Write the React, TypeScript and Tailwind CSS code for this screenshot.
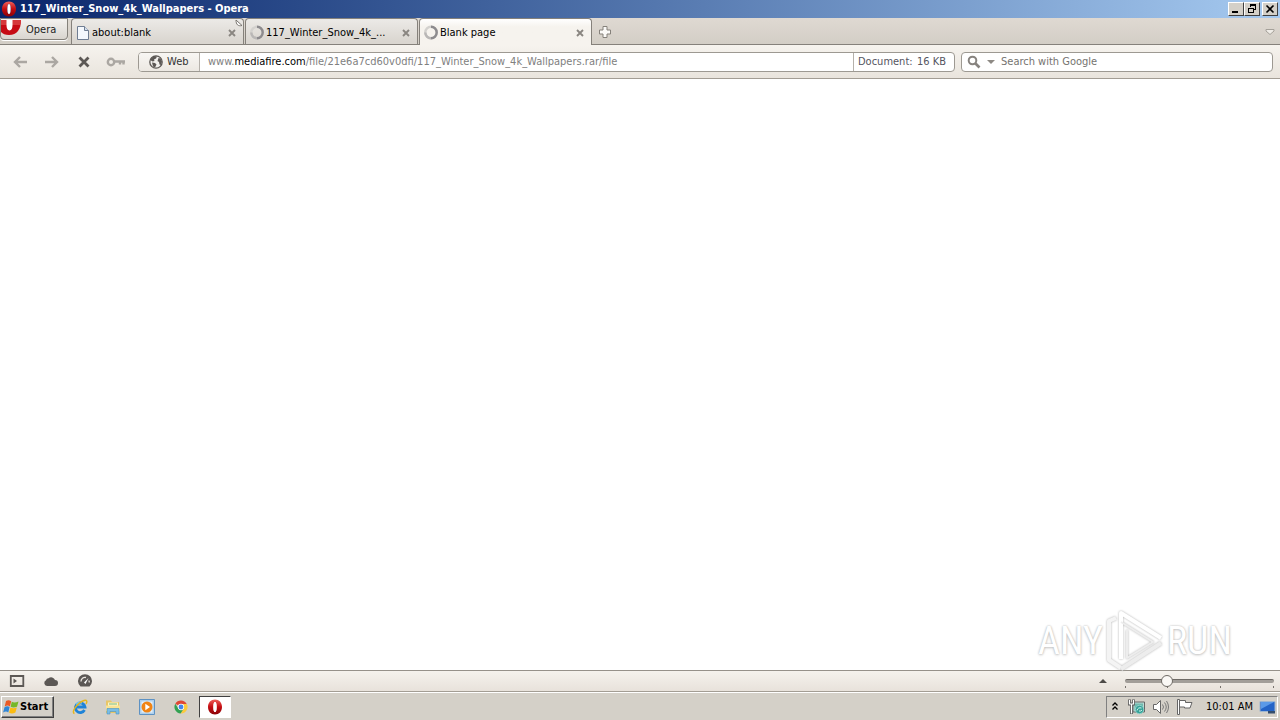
import React from "react";

const BTN3D =
  "border border-t-white border-l-white border-r-[#404040] border-b-[#404040] bg-[#d4d0c8]";

function OperaMark({ className }: { className: string }) {
  return (
    <svg className={className} viewBox="0 0 16 16" aria-hidden="true">
      <defs>
        <linearGradient id="opera-red" x1="0" y1="0" x2="0" y2="1">
          <stop offset="0" stopColor="#f0605a" />
          <stop offset="0.5" stopColor="#c40d12" />
          <stop offset="1" stopColor="#8a0307" />
        </linearGradient>
      </defs>
      <path
        fillRule="evenodd"
        fill="url(#opera-red)"
        d="M8 .5C3.900 .5 1 3.600 1 8s2.900 7.500 7 7.500 7-3.100 7-7.500S12.100.5 8 .5Zm0 2.500c1.100 0 1.600 1.800 1.600 5s-.5 5-1.600 5S6.400 11.200 6.400 8 6.900 3 8 3Z"
      />
      <path d="M8 3c1.100 0 1.600 1.800 1.600 5s-.5 5-1.600 5S6.400 11.200 6.400 8 6.900 3 8 3Z" fill="#fff" />
    </svg>
  );
}

function Spinner() {
  return (
    <svg className="size-4 shrink-0" viewBox="0 0 16 16" fill="none" strokeWidth="2.400" aria-hidden="true">
      <circle cx="8" cy="7.500" r="5.700" stroke="#d3d1ce" />
      <path d="M8 1.800A5.700 5.700 0 0 1 8 13.200" stroke="#8d8b8e" />
      <path d="M8 13.200A5.700 5.700 0 0 1 2.300 7.500" stroke="#b9b7b6" />
    </svg>
  );
}

function PageIcon() {
  return (
    <svg className="size-4 shrink-0" viewBox="0 0 16 16" aria-hidden="true">
      <path d="M2.500 1.500h7l4 4v9h-11z" fill="#f4f8fd" stroke="#6f7d92" />
      <path d="M9.500 1.500v4h4" fill="#d5e0ee" stroke="#6f7d92" />
    </svg>
  );
}

function CloseX() {
  return (
    <svg className="size-2" viewBox="0 0 8 8" aria-hidden="true">
      <path d="M1 1l6 6M7 1L1 7" stroke="#8a8681" strokeWidth="1.900" />
    </svg>
  );
}

function Tab({ icon, label, active }: { icon: React.ReactNode; label: string; active?: boolean }) {
  return (
    <div
      className={
        "flex w-[173px] items-center rounded-t-[4px] border border-b-0 border-[#85817b] pt-0.5 pr-[5px] pl-[3px] " +
        (active
          ? "h-[27px] bg-gradient-to-b from-white to-[#f6f3ee] to-30%"
          : "h-[26px] bg-gradient-to-b from-[#eceae7] to-[#dad6d0] to-90%")
      }
    >
      {icon}
      <button type="button" className="min-w-0 flex-1 truncate pl-px text-left text-black">
        {label}
      </button>
      <button type="button" aria-label={"Close " + label} className="flex size-3 items-center justify-center">
        <CloseX />
      </button>
    </div>
  );
}

function TitleBar() {
  return (
    <header className="flex h-[18px] items-center bg-gradient-to-r from-[#0a246a] to-[#a6caf0] pr-0.5 pl-px">
      <OperaMark className="size-4" />
      <h1 className="flex-1 pl-[3px] font-bold text-white">117_Winter_Snow_4k_Wallpapers - Opera</h1>
      <button type="button" aria-label="Minimize" className={"h-3.5 w-4 " + BTN3D}>
        <svg className="size-3" viewBox="0 0 12 12" shapeRendering="crispEdges">
          <path d="M3 8h6v2H3z" />
        </svg>
      </button>
      <button type="button" aria-label="Restore" className={"h-3.5 w-4 " + BTN3D}>
        <svg className="ml-px size-3" viewBox="0 0 12 12" fill="none" stroke="#000" shapeRendering="crispEdges">
          <path d="M4.500 4V1.500h5v5H8M4 2h6M2.500 5.500h5v4h-5zM2 5h6" />
        </svg>
      </button>
      <button type="button" aria-label="Close window" className={"ml-0.5 h-3.5 w-4 " + BTN3D}>
        <svg className="ml-px size-3" viewBox="0 0 12 12">
          <path d="M2.500 2.500l7 7M9.500 2.500l-7 7" stroke="#000" strokeWidth="1.600" />
        </svg>
      </button>
    </header>
  );
}

function TabBar() {
  return (
    <nav className="relative flex h-[27px] items-end gap-px border-b border-[#85817b] bg-gradient-to-b from-[#dfd9d2] to-[#d3cec6]">
      <button
        type="button"
        className="mr-0.5 flex h-[22px] w-[68px] items-start self-start rounded-br-[4px] rounded-bl-[4px] border border-[#85817b] bg-gradient-to-b from-[#f4f2f0] to-[#d9d5cf] text-[#222] shadow-[0_1px_0_#fff]"
      >
        <svg className="h-4 w-5" viewBox="0 0 20 16" aria-hidden="true">
          <path d="M0 1h20c0 9-4 15-12 15-4 0-6-1-8-3z" fill="#c60b14" />
          <path d="M0 1h20l-1 5H0z" fill="#dd4c4c" opacity=".7" />
          <path d="M5.500 1h6v5c0 3-1 5.500-3 5.500s-3-2.500-3-5.500z" fill="#fff" />
        </svg>
        <span className="pt-1 pl-[5px]">Opera</span>
      </button>
      <Tab icon={<PageIcon />} label="about:blank" />
      <Tab icon={<Spinner />} label="117_Winter_Snow_4k_..." />
      <div className="-mb-px">
        <Tab icon={<Spinner />} label="Blank page" active />
      </div>
      <button type="button" aria-label="New tab" className="mb-[5px] ml-[5px]">
        <svg className="size-3.5" viewBox="0 0 14 14">
          <path d="M5 1.500h4V5h3.500v4H9v3.500H5V9H1.500V5H5z" fill="#fbfaf8" stroke="#85817b" />
        </svg>
      </button>
      <button type="button" aria-label="Closed tabs" className="mr-1 mb-2 ml-auto">
        <svg className="h-2 w-3" viewBox="0 0 12 8">
          <path d="M2 1.500h8v1.500L6 6.500 2 3z" fill="#efece7" stroke="#a5a19a" />
        </svg>
      </button>
      <svg className="absolute top-px left-[235px] size-2" viewBox="0 0 8 8" aria-hidden="true">
        <path d="M1 1l6 5.500c-4 1-6-1-6-5.500z" fill="#fff" stroke="#77736e" />
      </svg>
    </nav>
  );
}

function Toolbar() {
  return (
    <div className="flex h-[34px] items-center border-b border-[#a39d94] bg-gradient-to-b from-[#f6f3ee] to-[#e9e4dd] pr-[7px] pl-3">
      <button type="button" aria-label="Back" className="w-8">
        <svg className="h-4 w-4" viewBox="0 0 16 16" fill="none" stroke="#aba7a2" strokeWidth="2.400">
          <path d="M15 8H3M8 3L3 8l5 5" />
        </svg>
      </button>
      <button type="button" aria-label="Forward" className="w-8">
        <svg className="h-4 w-4" viewBox="0 0 16 16" fill="none" stroke="#aba7a2" strokeWidth="2.400">
          <path d="M1 8h12M8 3l5 5-5 5" />
        </svg>
      </button>
      <button type="button" aria-label="Stop" className="w-[30px]">
        <svg className="h-4 w-4" viewBox="0 0 16 16" stroke="#5c5855" strokeWidth="2.800">
          <path d="M3.500 3.500l9 9M12.500 3.500l-9 9" />
        </svg>
      </button>
      <button type="button" aria-label="Password manager" className="w-8">
        <svg className="h-4 w-5" viewBox="0 0 20 16" fill="none" stroke="#aba7a2" strokeWidth="2.400">
          <circle cx="5" cy="8" r="3.200" />
          <path d="M8 7.500h11M14 8v2.500M17.500 8v2.500" />
        </svg>
      </button>
      <div className="flex h-5 min-w-0 flex-1 overflow-hidden rounded-[4px] border border-[#9d9992] bg-white">
        <button
          type="button"
          className="flex w-[61px] items-center gap-[3px] border-r border-[#b5b1ab] bg-gradient-to-b from-[#f8f6f3] to-[#ece8e2] pl-[9px] text-[#333]"
        >
          <svg className="size-4" viewBox="0 0 16 16" aria-hidden="true">
            <circle cx="8" cy="8" r="6.200" fill="#f1efec" stroke="#5c5855" strokeWidth="1.300" />
            <path
              d="M3 4.500l3-2.500 3 .5-1 2-2 1 .5 1.500-2 .5L2.300 6zM4 8.500l3 .5 1.500 1.500L7 13.500l-2-1zM10.500 4l2 .5 1.500 3-1 3.500-1.500-.5-.5-2.500-1.500-1z"
              fill="#5c5855"
            />
          </svg>
          Web
        </button>
        <a href="#address" className="min-w-0 flex-1 self-center truncate pl-2 text-[#808080]">
          www.<span className="text-black">mediafire.com</span>/file/21e6a7cd60v0dfi/117_Winter_Snow_4k_Wallpapers.rar/file
        </a>
        <div className="flex w-[101px] items-center justify-between border-l border-[#b5b1ab] pr-2 pl-1 text-[#55555f]">
          <span>Document:</span>
          <span>16 KB</span>
        </div>
      </div>
      <div className="ml-1.5 flex h-5 w-[312px] items-center rounded-[4px] border border-[#9d9992] bg-white pl-[5px]">
        <svg className="size-3.5" viewBox="0 0 14 14" fill="none" stroke="#87837f" aria-hidden="true">
          <circle cx="5.500" cy="5.500" r="3.800" strokeWidth="2" />
          <path d="M8.500 8.500l4 4" strokeWidth="2.600" />
        </svg>
        <button type="button" aria-label="Choose search engine" className="ml-1.5">
          <svg className="h-2 w-2" viewBox="0 0 8 8">
            <path d="M0 2h8L4 6z" fill="#8d8984" />
          </svg>
        </button>
        <input
          type="text"
          aria-label="Search with Google"
          placeholder="Search with Google"
          className="ml-1.5 min-w-0 flex-1 outline-none placeholder:text-[#75736f]"
        />
      </div>
    </div>
  );
}

function Watermark() {
  return (
    <div className="pointer-events-none absolute right-12 -bottom-0.5 z-10 flex items-center font-['Roboto_Condensed','Liberation_Sans',sans-serif] text-[38px] leading-[60px] text-white [text-shadow:0_0_2px_#b4b4b4,0_1px_3px_#cfcfcf]">
      <span>ANY</span>
      <svg
        className="mr-1 ml-0.5 h-[62px] w-[58px] overflow-visible drop-shadow-[0_0_1px_#b0b0b0]"
        viewBox="0 0 58 62"
        fill="none"
        stroke="#fff"
        strokeWidth="4"
        strokeLinejoin="round"
        aria-hidden="true"
      >
        <path d="M11 8L4 11V50L16 58" stroke="#f4f4f4" />
        <path d="M16 49V3L56 28" />
        <path d="M16 59L56 33" stroke="#ededed" />
        <path d="M16 12L48 32L22 48V20" strokeWidth="2" stroke="#ededed" />
      </svg>
      <span>RUN</span>
    </div>
  );
}

function StatusBar() {
  return (
    <div className="flex h-[22px] items-center border-t border-b border-t-[#96918a] border-b-[#a39d94] bg-gradient-to-b from-[#f5f2ed] to-[#e8e2db] pr-1.5 pl-[9px]">
      <button type="button" aria-label="Panels" className="w-[34px]">
        <svg className="size-4" viewBox="0 0 16 16" fill="none" stroke="#5c5855">
          <path d="M1.800 3h12.500v10H1.800z" strokeWidth="1.800" />
          <path d="M4.500 5.500L8 8l-3.500 2.500z" fill="#5c5855" stroke="none" />
        </svg>
      </button>
      <button type="button" aria-label="Opera Link" className="w-[34px]">
        <svg className="size-4" viewBox="0 0 16 16" fill="#5c5855">
          <path d="M4 13a3 3 0 0 1-1-5.700 2.800 2.800 0 0 1 2.500-2A4 4 0 0 1 12 7a3 3 0 0 1 0 6z" />
        </svg>
      </button>
      <button type="button" aria-label="Opera Turbo" className="w-[34px]">
        <svg className="size-4" viewBox="0 0 16 16">
          <path d="M3.500 13.500a7 7 0 1 1 9 0z" fill="#5c5855" />
          <path d="M4 8.500A4 4 0 0 1 9 4.500M12 7.500l.3 2" stroke="#ece7e1" fill="none" strokeWidth="1.300" />
          <path d="M11.500 5L7 9.500l1.500 1.500z" fill="#fff" />
        </svg>
      </button>
      <button type="button" aria-label="View options" className="ml-auto">
        <svg className="h-2 w-2" viewBox="0 0 8 8">
          <path d="M0 6l4-4 4 4z" fill="#4d4a47" />
        </svg>
      </button>
      <div className="relative ml-[18px] flex h-3.5 w-[149px] items-center">
        <div className="h-1 w-full rounded-sm border-t border-[#6e6a65] bg-[#a29e99]" />
        <svg className="absolute bottom-0 left-0 h-0.5 w-full" viewBox="0 0 149 2" aria-hidden="true">
          <path d="M.5 0v2M42.500 0v2M95.500 0v2M148.500 0v2" stroke="#77736e" />
        </svg>
        <input
          type="range"
          aria-label="Zoom"
          min={20}
          max={300}
          defaultValue={94}
          className="absolute inset-0 w-full appearance-none bg-transparent [&::-webkit-slider-thumb]:size-3 [&::-webkit-slider-thumb]:appearance-none [&::-webkit-slider-thumb]:rounded-full [&::-webkit-slider-thumb]:border [&::-webkit-slider-thumb]:border-[#6e6a65] [&::-webkit-slider-thumb]:bg-[#faf8f5]"
        />
      </div>
    </div>
  );
}

function Taskbar() {
  return (
    <footer className="flex h-7 items-center border-t border-white bg-[#d4d0c8] pr-0.5 pl-px">
      <button
        type="button"
        className={
          "flex h-[22px] w-[53px] items-center gap-px pl-px font-bold text-black shadow-[inset_-1px_-1px_0_#808080] " + BTN3D
        }
      >
        <svg className="size-4" viewBox="0 0 16 16" aria-hidden="true">
          <path d="M3 2c2-1.300 3.500-1 5.200.2L6.900 7.500c-1.500-1.200-3-1.200-5.200 0z" fill="#ea5a24" />
          <path d="M8.800 2.800c1.900 1.200 3.900 1 6.700-.3L14 7.700c-2.400 1-4.400 1-6.400.1z" fill="#76b82a" />
          <path d="M1.500 8.200c2-1.200 3.500-1.200 5.100-.1L5.300 13.500c-1.500-1.200-3-1.200-5.200 0z" fill="#2f86d6" />
          <path d="M7.400 8.600c1.900 1 3.900 1 6.400 0L12.400 13.600c-2.400 1.200-4.400 1.200-6.300.2z" fill="#fbbc12" />
        </svg>
        Start
      </button>
      <div className="flex items-center pl-[10px]">
        <button type="button" aria-label="Internet Explorer" className="flex w-8 justify-center">
          <svg className="size-4" viewBox="0 0 16 16" fill="none">
            <path d="M12.500 11A4.800 4.800 0 1 1 13 8H5" stroke="#1e83d8" strokeWidth="2.800" />
            <path d="M4 5.500A4.800 4.800 0 0 1 10 4" stroke="#69c5f5" strokeWidth="1.500" />
            <path d="M2.500 14.500C-1.500 13 6 3.500 12 1.500c3-1 3.500 1 2 3.500" stroke="#e5b51b" strokeWidth="1.400" />
          </svg>
        </button>
        <button type="button" aria-label="Windows Explorer" className="flex w-[34px] justify-center">
          <svg className="size-4" viewBox="0 0 16 16">
            <path d="M1 1.500h5l1 1.500h7V14H1z" fill="#e8c667" />
            <path d="M3 3.500h10V8H3z" fill="#fff5c5" />
            <path d="M4 5h8" stroke="#78bb80" />
            <path d="M1 6.500h14V12H1z" fill="#f9e394" />
            <path d="M2 9.500h12V15h-3v-2.500H5V15H2z" fill="#79bde6" stroke="#4a93c2" strokeWidth=".6" />
          </svg>
        </button>
        <button type="button" aria-label="Media Player" className="flex w-[34px] justify-center">
          <svg className="size-4" viewBox="0 0 16 16">
            <path d="M.5.5h15v15H.5z" fill="#aed0ed" stroke="#5e92c3" />
            <path d="M2.500 2.500h11v11h-11z" fill="#e4f0fa" />
            <circle cx="8" cy="8" r="5.500" fill="#f08415" />
            <path d="M6.300 4.800v6.400L11 8z" fill="#fff" />
          </svg>
        </button>
        <button type="button" aria-label="Chrome" className="flex w-[34px] justify-center">
          <svg className="size-3.5" viewBox="0 0 16 16">
            <path d="M8 8L1.500 4.200A7.500 7.500 0 0 1 14.500 4.500H8z" fill="#df4735" />
            <path d="M8 8V4.500h6.600A7.500 7.500 0 0 1 7.500 15.500L11 9.700z" fill="#fbca3d" />
            <path d="M8 8l3 2-3.500 5.500A7.500 7.500 0 0 1 1.500 4.200L5 10z" fill="#32a152" />
            <circle cx="8" cy="8" r="3.600" fill="#fff" />
            <circle cx="8" cy="8" r="2.800" fill="#4385ec" />
          </svg>
        </button>
        <button
          type="button"
          aria-label="Opera"
          className="ml-px flex h-[22px] w-8 items-center justify-center border border-t-[#404040] border-r-white border-b-white border-l-[#404040] bg-white"
        >
          <OperaMark className="size-4" />
        </button>
      </div>
      <div className="ml-auto flex h-[22px] w-[172px] items-center border border-t-[#808080] border-r-white border-b-white border-l-[#808080] pl-1 text-black">
        <button type="button" aria-label="Show hidden icons">
          <svg className="h-3 w-2" viewBox="0 0 8 12" fill="none" stroke="#000" strokeWidth="1.300">
            <path d="M1.500 4.500L4 2l2.500 2.500M1.500 8.500L4 6l2.500 2.500" />
          </svg>
        </button>
        <svg className="ml-[9px] size-[18px]" viewBox="0 0 18 18" role="img" aria-label="Network">
          <path d="M5 4h11.500v10H5z" fill="#b9dcd6" stroke="#666" />
          <path d="M6.500 5.500h8.500v7H6.500z" fill="#6fb9ae" />
          <circle cx="11.500" cy="11.500" r="4.200" fill="#35a197" stroke="#8fd2ca" />
          <path d="M9 12.500q1-3.500 4.500-2.500M11 13q2 .5 3-1" stroke="#d8f5ef" fill="none" />
          <path d="M1.500 1.500V6h4V1.500M3.500 6v10" fill="none" stroke="#555" strokeWidth="2.800" />
          <path d="M1.500 2v4h4V2M3.500 6v9.500" fill="none" stroke="#fff" strokeWidth="1.200" />
        </svg>
        <svg className="ml-1.5 size-[18px]" viewBox="0 0 18 18" fill="none" role="img" aria-label="Volume">
          <path d="M1.500 6.500h3l4-4v13l-4-4h-3z" fill="#fff" stroke="#666" />
          <path d="M10.500 6.500q2 2.500 0 5M12.500 4.500q3.500 4.500 0 9M14.500 3q4 6 0 12" stroke="#777" />
        </svg>
        <svg className="ml-1.5 size-[18px]" viewBox="0 0 18 18" role="img" aria-label="Action Center">
          <path d="M1.500 1.500h2v15h-2z" fill="#fff" stroke="#666" />
          <path d="M3.500 2.500h6v2h6.500l-2 5.500H8.500V9h-5z" fill="#fff" stroke="#666" />
        </svg>
        <time className="ml-auto">10:01 AM</time>
        <svg className="mr-px ml-1.5 h-4 w-[17px]" viewBox="0 0 17 16" role="img" aria-label="Desktop">
          <path d="M1 2.500h15v10H1z" fill="#2464c7" stroke="#9fb6cf" />
          <path d="M2 3h13L2 10z" fill="#5b9ae8" />
          <path d="M9 12h7v2.500H9z" fill="#344d6d" />
        </svg>
      </div>
    </footer>
  );
}

export default function App() {
  return (
    <div className="flex min-h-screen flex-col bg-white font-['DejaVu_Sans_Condensed','DejaVu_Sans',sans-serif] text-[11px] leading-[14px]">
      <TitleBar />
      <TabBar />
      <Toolbar />
      <main className="relative flex-1 bg-white">
        <Watermark />
      </main>
      <StatusBar />
      <Taskbar />
    </div>
  );
}
